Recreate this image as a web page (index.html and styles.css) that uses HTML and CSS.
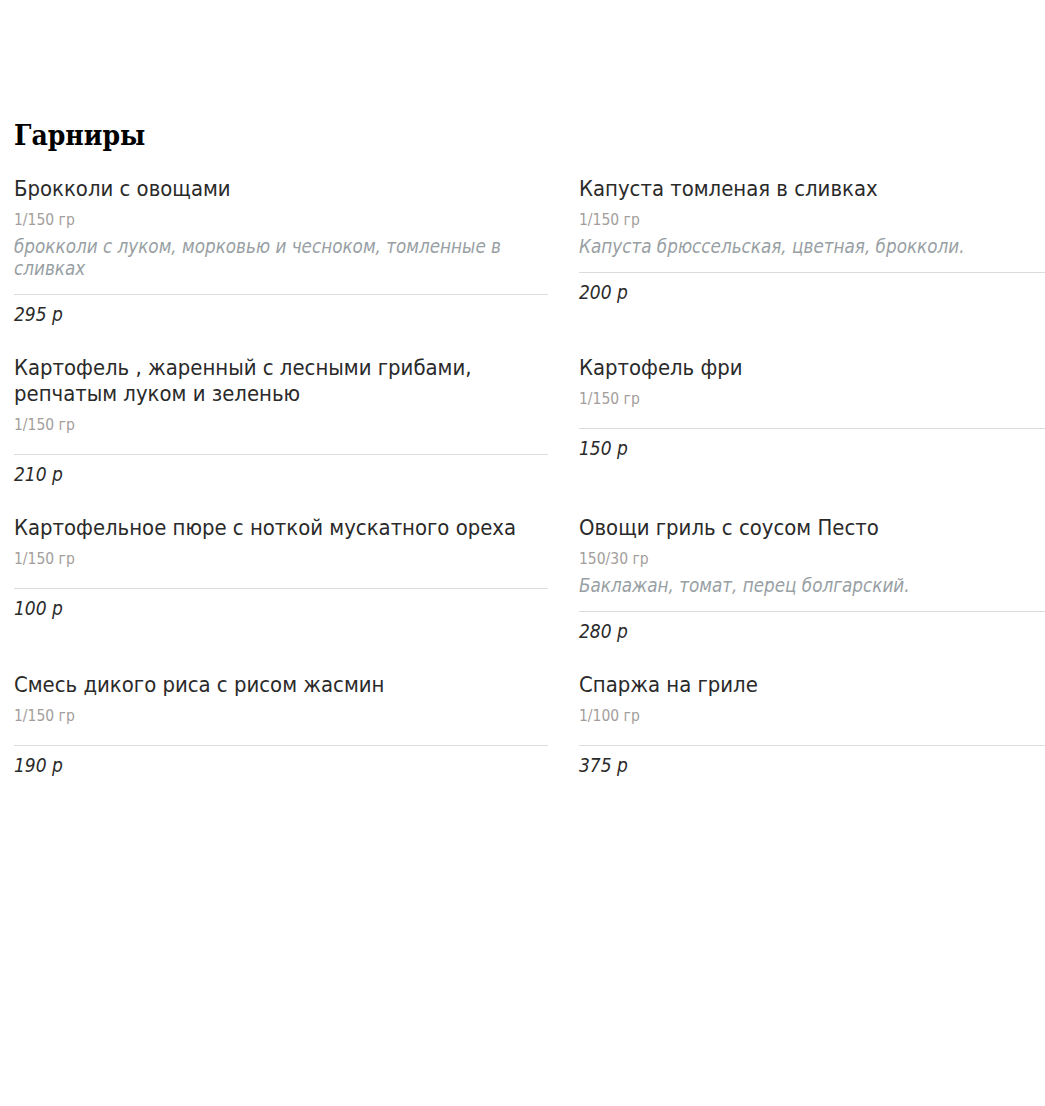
FILE: index.html
```html
<!DOCTYPE html>
<html lang="ru">
<head>
<meta charset="utf-8">
<title>Гарниры</title>
<link rel="stylesheet" href="styles.css">
</head>
<body>
<section class="menu">
  <h2 class="menu-title">Гарниры</h2>
  <div class="grid">
    <div class="item">
      <div class="name">Брокколи с овощами</div>
      <div class="weight">1/150 гр</div>
      <div class="desc">брокколи с луком, морковью и чесноком, томленные в сливках</div>
      <div class="price">295 р</div>
    </div>
    <div class="item">
      <div class="name">Капуста томленая в сливках</div>
      <div class="weight">1/150 гр</div>
      <div class="desc">Капуста брюссельская, цветная, брокколи.</div>
      <div class="price">200 р</div>
    </div>
    <div class="item">
      <div class="name">Картофель , жаренный с лесными грибами, репчатым луком и зеленью</div>
      <div class="weight">1/150 гр</div>
      <div class="price">210 р</div>
    </div>
    <div class="item">
      <div class="name">Картофель фри</div>
      <div class="weight">1/150 гр</div>
      <div class="price">150 р</div>
    </div>
    <div class="item">
      <div class="name">Картофельное пюре с ноткой мускатного ореха</div>
      <div class="weight">1/150 гр</div>
      <div class="price">100 р</div>
    </div>
    <div class="item">
      <div class="name">Овощи гриль с соусом Песто</div>
      <div class="weight">150/30 гр</div>
      <div class="desc">Баклажан, томат, перец болгарский.</div>
      <div class="price">280 р</div>
    </div>
    <div class="item">
      <div class="name">Смесь дикого риса с рисом жасмин</div>
      <div class="weight">1/150 гр</div>
      <div class="price">190 р</div>
    </div>
    <div class="item">
      <div class="name">Спаржа на гриле</div>
      <div class="weight">1/100 гр</div>
      <div class="price">375 р</div>
    </div>
  </div>
</section>
</body>
</html>
```

FILE: styles.css
```css
html, body {
  margin: 0;
  padding: 0;
  background: #fff;
  overflow-x: hidden;
}

.menu {
  padding: 120px 0 0 14px;
  font-family: "DejaVu Sans Condensed", "DejaVu Sans", sans-serif;
  font-stretch: condensed;
}

.menu-title {
  margin: 0 0 24px;
  font-family: "DejaVu Serif Condensed", "DejaVu Serif", serif;
  font-stretch: condensed;
  font-weight: bold;
  font-size: 28px;
  line-height: 32px;
  color: #000;
}

.grid {
  display: grid;
  grid-template-columns: 534px 1fr;
  column-gap: 31px;
  row-gap: 30px;
}

.item {
  display: flex;
  flex-direction: column;
}

.name {
  font-size: 21.9px;
  line-height: 26px;
  color: #2a2a2a;
}

.weight {
  margin-top: 8px;
  margin-bottom: 5px;
  font-size: 15.5px;
  line-height: 20px;
  color: #a39e9b;
}

.desc {
  margin-top: 1px;
  font-size: 18.7px;
  font-style: italic;
  line-height: 22px;
  color: #98a0a4;
}

.price {
  margin-top: 14px;
  padding-top: 8px;
  border-top: 1px solid #dcdcdc;
  font-size: 19px;
  font-style: italic;
  line-height: 22px;
  color: #2a2a2a;
}
```
